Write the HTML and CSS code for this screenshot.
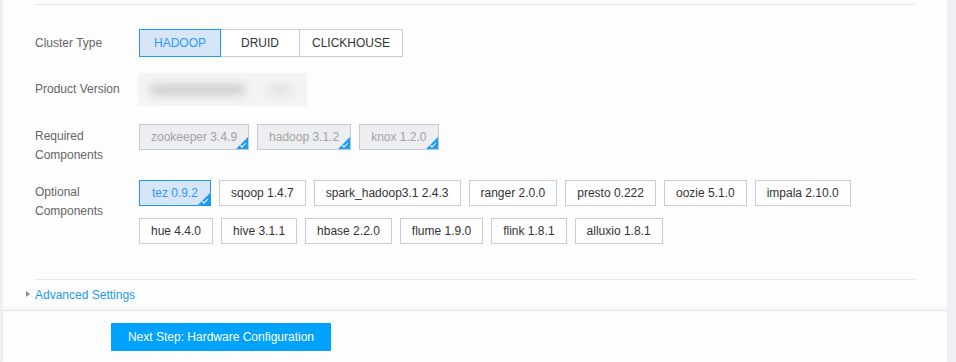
FILE: index.html
```html
<!DOCTYPE html>
<html lang="en">
<head>
  <meta charset="UTF-8">
  <title>Create Cluster</title>
  <meta name="viewport" content="width=device-width, initial-scale=1.0">
  <link rel="stylesheet" href="styles.css">
</head>
<body>
  <div class="page">
    <div class="panel">
      <div class="content">
        <hr class="divider top">

        <div class="row">
          <div class="label">Cluster Type</div>
          <div class="segmented">
            <button class="seg active">HADOOP</button>
            <button class="seg">DRUID</button>
            <button class="seg">CLICKHOUSE</button>
          </div>
        </div>

        <div class="row version-row">
          <div class="label">Product Version</div>
          <div class="blurred">
            <span class="blob wide"></span>
            <span class="blob small"></span>
          </div>
        </div>

        <div class="row tags-row required">
          <div class="label multi">Required<br>Components</div>
          <div class="tags">
            <span class="tag disabled checked">zookeeper 3.4.9</span>
            <span class="tag disabled checked">hadoop 3.1.2</span>
            <span class="tag disabled checked">knox 1.2.0</span>
          </div>
        </div>

        <div class="row tags-row">
          <div class="label multi">Optional<br>Components</div>
          <div class="tags">
            <span class="tag selected checked">tez 0.9.2</span>
            <span class="tag">sqoop 1.4.7</span>
            <span class="tag">spark_hadoop3.1 2.4.3</span>
            <span class="tag">ranger 2.0.0</span>
            <span class="tag">presto 0.222</span>
            <span class="tag">oozie 5.1.0</span>
            <span class="tag">impala 2.10.0</span>
            <span class="tag">hue 4.4.0</span>
            <span class="tag">hive 3.1.1</span>
            <span class="tag">hbase 2.2.0</span>
            <span class="tag">flume 1.9.0</span>
            <span class="tag">flink 1.8.1</span>
            <span class="tag">alluxio 1.8.1</span>
          </div>
        </div>

        <hr class="divider bottom">

        <a class="advanced" href="#"><span class="caret"></span>Advanced Settings</a>
      </div>

      <div class="footer">
        <button class="primary">Next Step: Hardware Configuration</button>
      </div>
    </div>
  </div>
</body>
</html>
```

FILE: styles.css
```css
* { box-sizing: border-box; }

html, body {
  margin: 0;
  padding: 0;
  height: 100%;
  font-family: 'Liberation Sans', Arial, sans-serif;
  font-size: 12px;
  color: #333;
  background-color: #eff0f5;
  overflow: hidden;
}

.page {
  height: 100%;
  padding: 0 9px 0 3px;
}

.panel {
  height: 100%;
  display: flex;
  flex-direction: column;
  background-color: #fdfdfd;
}

.content {
  flex: 1;
  padding: 4px 32px 0 32px;
}

.divider {
  margin: 0;
  border: none;
  height: 1px;
  background-color: #e5e8ee;
}

.divider.top { margin-bottom: 24px; }
.divider.bottom { margin-top: 35px; }

.row {
  display: flex;
  align-items: center;
  margin-bottom: 16px;
}

.label {
  width: 104px;
  flex-shrink: 0;
  color: #666;
  line-height: 19px;
}

.segmented {
  display: flex;
}

.seg {
  min-width: 80px;
  height: 28px;
  padding: 0 12px;
  margin-left: -1px;
  font-family: inherit;
  font-size: 12px;
  color: #333;
  background-color: #fff;
  border: 1px solid #c9ccd4;
  cursor: pointer;
}

.seg:first-child { margin-left: 0; }

.seg.active {
  position: relative;
  z-index: 1;
  min-width: 82px;
  color: #3196fa;
  background-color: #d6e6f8;
  border-color: #1c9cf0;
}

.version-row { margin-bottom: 18px; }

.blurred {
  position: relative;
  width: 169px;
  height: 33px;
  margin-left: -1px;
  background-color: #f4f4f4;
  overflow: hidden;
}

.blob {
  position: absolute;
  top: 11px;
  height: 11px;
  border-radius: 6px;
  background-color: #cfcfcf;
  filter: blur(4px);
}

.blob.wide { left: 12px; width: 96px; }
.blob.small { left: 130px; width: 24px; background-color: #e2e2e2; }

.tags-row {
  align-items: flex-start;
  margin-bottom: 0;
}

.tags-row.required { margin-bottom: 15px; }

.label.multi { padding-top: 3px; }

.tags {
  display: flex;
  flex-wrap: wrap;
  gap: 12px 8px;
  max-width: 740px;
}

.tag {
  position: relative;
  display: inline-flex;
  align-items: center;
  height: 26px;
  padding: 0 11px;
  background-color: #fff;
  border: 1px solid #c9ccd4;
  color: #333;
  overflow: hidden;
}

.tag.disabled {
  background-color: #eceef1;
  border-color: #c6c9cf;
  color: #a3a3a3;
}

.tag.selected {
  padding: 0 12px;
  background-color: #d6e6f8;
  border-color: #1c9cf0;
  color: #3196fa;
}

.tag.checked::after {
  content: "";
  position: absolute;
  right: 0;
  bottom: 0;
  border-style: solid;
  border-width: 6px;
  border-color: transparent #1c9cf0 #1c9cf0 transparent;
}

.tag.checked::before {
  content: "";
  position: absolute;
  z-index: 1;
  right: 2px;
  bottom: 3px;
  width: 5px;
  height: 2px;
  border-left: 1px solid #fff;
  border-bottom: 1px solid #fff;
  transform: rotate(-45deg);
}

.advanced {
  position: relative;
  display: inline-block;
  margin-top: 7px;
  color: #1a9cf0;
  text-decoration: none;
  line-height: 16px;
}

.caret {
  position: absolute;
  left: -9px;
  top: 4px;
  border-style: solid;
  border-width: 3.5px 0 3.5px 4px;
  border-color: transparent transparent transparent #888;
}

.footer {
  height: 52px;
  padding: 12px 0 0 108px;
  border-top: 1px solid #e1e4ea;
  box-shadow: 0 -2px 4px rgba(0, 0, 0, 0.04);
  background-color: #fdfdfd;
}

.primary {
  width: 220px;
  height: 28px;
  font-family: inherit;
  font-size: 12px;
  color: #fff;
  background-color: #00a2fe;
  border: none;
  border-radius: 1px;
  cursor: pointer;
}
```
